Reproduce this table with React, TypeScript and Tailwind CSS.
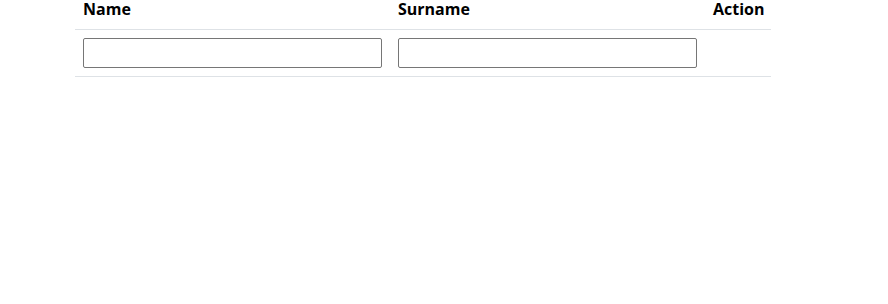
export default function App() {
  return (
    <div className="min-h-screen bg-white font-['Segoe_UI','Open_Sans',sans-serif] text-black">
      <div className="ml-[75px] w-[696px]">
        <table className="w-full table-fixed border-collapse">
          <thead>
            <tr>
              <th className="w-[315px] border-b border-[#dee2e6] px-2 pt-0 pb-[11px] text-left text-base font-bold leading-[18px]">Name</th>
              <th className="w-[315px] border-b border-[#dee2e6] px-2 pt-0 pb-[11px] text-left text-base font-bold leading-[18px]">Surname</th>
              <th className="border-b border-[#dee2e6] px-2 pt-0 pb-[11px] text-left text-base font-bold leading-[18px]">Action</th>
            </tr>
          </thead>
          <tbody>
            <tr>
              <td className="border-b border-[#dee2e6] p-2">
                <input type="text" className="block h-[30px] w-full rounded-[2px] border border-[#767676] bg-white px-1 outline-none" />
              </td>
              <td className="border-b border-[#dee2e6] p-2">
                <input type="text" className="block h-[30px] w-full rounded-[2px] border border-[#767676] bg-white px-1 outline-none" />
              </td>
              <td className="border-b border-[#dee2e6] p-2"></td>
            </tr>
          </tbody>
        </table>
      </div>
    </div>
  );
}
